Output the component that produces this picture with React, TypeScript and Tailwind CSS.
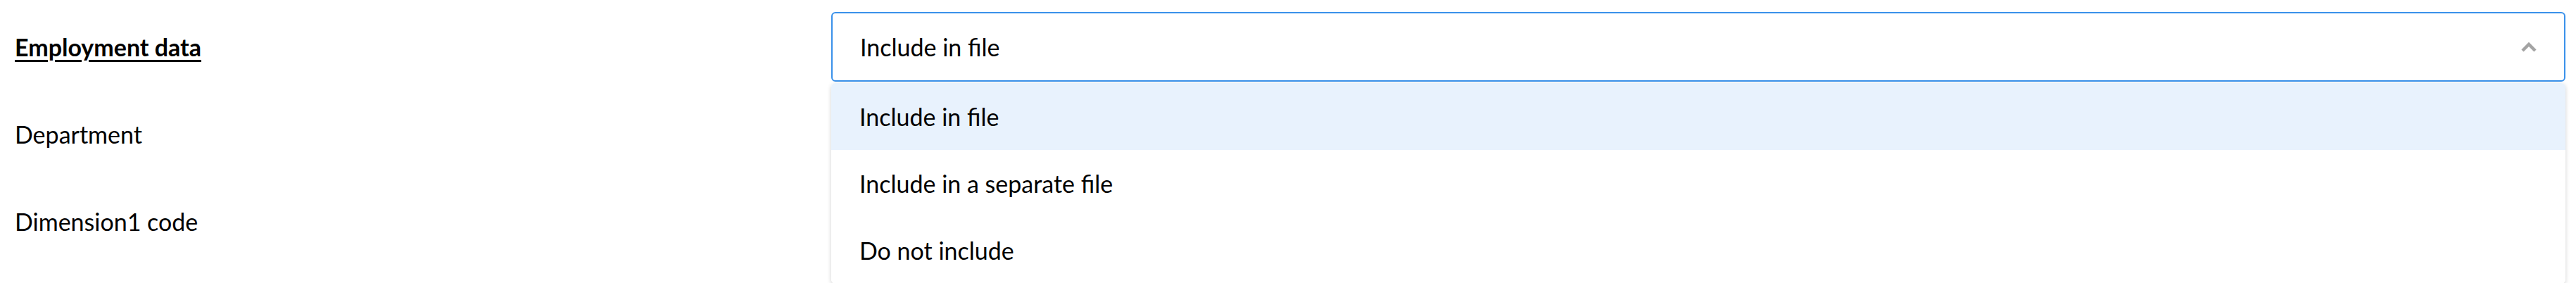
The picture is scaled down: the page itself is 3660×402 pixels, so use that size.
import React from "react";

function Chevron() {
  return (
    <svg width="24" height="16" viewBox="0 0 24 16" fill="none" className="shrink-0">
      <path d="M3 13 L12 4 L21 13" stroke="#a3a3a3" strokeWidth="4.5" strokeLinecap="butt" strokeLinejoin="miter" />
    </svg>
  );
}

function Row({ label, bold, children }: { label: string; bold?: boolean; children?: React.ReactNode }) {
  return (
    <div className="flex h-[99px] items-center">
      <div className="w-[1181px] shrink-0 pl-[21px]">
        <span
          className={
            bold
              ? "font-bold underline decoration-[3px] underline-offset-[5px] text-[34px] text-black"
              : "text-[34px] text-black"
          }
        >
          {label}
        </span>
      </div>
      <div className="relative h-full flex-1 pr-[15px]">{children}</div>
    </div>
  );
}

export default function App() {
  const options = ["Include in file", "Include in a separate file", "Do not include"];
  return (
    <div
      className="h-[402px] w-[3660px] overflow-hidden bg-white pt-[17px]"
      style={{ fontFamily: "Lato, 'Open Sans', sans-serif" }}
    >
      <div className="flex flex-col gap-[25px]">
        <Row label="Employment data" bold>
          <div className="flex h-full items-center justify-between rounded-[6px] border-2 border-[#3a91ea] bg-white pl-[39px] pr-[38px]">
            <span className="text-[34px] text-black">Include in file</span>
            <Chevron />
          </div>
          <div className="absolute left-0 right-[15px] top-[101px] z-10 overflow-hidden rounded-[6px] bg-white shadow-[0_2px_6px_rgba(0,0,0,0.18)]">
            {options.map((o, i) => (
              <div
                key={o}
                className={
                  i === 0
                    ? "flex h-[95px] items-center bg-[#e8f2fd] pl-[40px] text-[34px] text-black"
                    : "flex h-[95px] items-center bg-white pl-[40px] text-[34px] text-black"
                }
              >
                {o}
              </div>
            ))}
          </div>
        </Row>
        <Row label="Department">
          <div className="h-full rounded-[6px] border-2 border-[#d4d4d4] bg-white" />
        </Row>
        <Row label="Dimension1 code">
          <div className="h-full rounded-[6px] border-2 border-[#d4d4d4] bg-white" />
        </Row>
      </div>
    </div>
  );
}
